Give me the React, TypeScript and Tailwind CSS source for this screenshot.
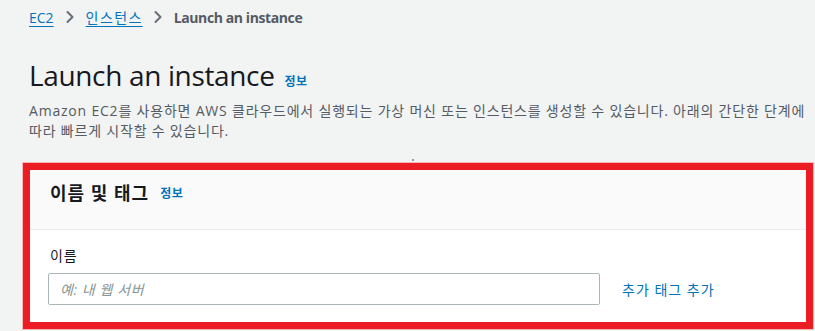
import { ChevronRight } from "lucide-react";

const font = { fontFamily: '"Open Sans", "Noto Sans CJK KR", sans-serif' };

export default function App() {
  return (
    <div
      className="h-[331px] w-[815px] overflow-hidden bg-[#f2f3f3] text-[#16191f]"
      style={font}
    >
      {/* Breadcrumbs */}
      <nav className="flex h-[34px] items-center pl-[29px] text-[14px]">
        <a className="text-[#0073bb] underline decoration-[#0073bb] underline-offset-[3px]">EC2</a>
        <ChevronRight className="mx-[6px] h-[20px] w-[20px] text-[#687078]" strokeWidth={2.5} />
        <a className="tracking-[1.4px] text-[#0073bb] underline underline-offset-[3px]">인스턴스</a>
        <ChevronRight className="ml-[5px] mr-[6px] h-[20px] w-[20px] text-[#687078]" strokeWidth={2.5} />
        <span className="font-bold tracking-[-0.4px] text-[#545b64]">Launch an instance</span>
      </nav>

      {/* Page header */}
      <div className="pl-[29px] pt-[21px]">
        <div className="flex items-baseline gap-[10px]">
          <h1 className="text-[28px] font-normal leading-[40px] tracking-[-0.35px] text-[#16191f]">Launch an instance</h1>
          <a className="text-[12px] font-bold tracking-[0.5px] text-[#0073bb]">정보</a>
        </div>
        <p className="mt-[6px] break-keep text-[14px] leading-[20px] tracking-[0.8px] text-[#545b64]">
          Amazon EC2를 사용하면 AWS 클라우드에서 실행되는 가상 머신 또는 인스턴스를 생성할 수 있습니다. 아래의 간단한 단계에 따라 빠르게 시작할 수 있습니다.
        </p>
      </div>

      <div className="ml-[412px] mt-[18px] h-[2px] w-[2px] bg-[#9aa0a6]" />

      {/* Name and tags panel */}
      <section className="ml-[23px] mt-[2px] w-[790px] border-[7px] border-[#ec1c24] bg-white shadow-[0_0_0_1px_#f6b8ba]">
        <div className="flex h-[60px] items-start gap-[11px] border-b border-[#eaeded] bg-[#fafafa] pl-[20px] pt-[10px]">
          <h2 className="text-[18px] font-bold leading-[26px] tracking-[1px] text-[#16191f]">이름 및 태그</h2>
          <a className="mt-[5px] text-[12px] font-bold leading-[18px] tracking-[0.5px] text-[#0073bb]">정보</a>
        </div>
        <div className="px-[18px] pb-[17px] pt-[15px]">
          <label className="block pl-[2px] text-[14px] leading-[22px] tracking-[0.8px] text-[#16191f]">이름</label>
          <div className="mt-[6px] flex items-center gap-[22px]">
            <input
              placeholder="예: 내 웹 서버"
              className="h-[32px] w-[552px] rounded-[2px] border border-[#aab7b8] bg-white px-[11px] text-[14px] tracking-[0.6px] placeholder:italic placeholder:text-[#879596] focus:outline-none"
              style={font}
            />
            <a className="text-[14px] tracking-[1px] text-[#0073bb]">추가 태그 추가</a>
          </div>
        </div>
      </section>
    </div>
  );
}
